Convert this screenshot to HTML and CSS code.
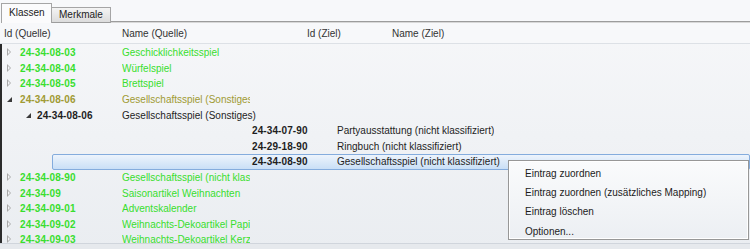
FILE: index.html
```html
<!DOCTYPE html>
<html>
	<head>
		<meta charset="utf-8">
		<title>Klassen</title>
		<link rel="stylesheet" href="styles.css">
	</head>
	<body>
	<div class="win">
		<div class="tabs">
			<div class="tab on">Klassen</div>
			<div class="tab">Merkmale</div>
			<div class="tabfill"></div>
		</div>
		<div class="panel">
			<div class="head">
				<span class="h1">Id (Quelle)</span>
				<span class="h2">Name (Quelle)</span>
				<span class="h3">Id (Ziel)</span>
				<span class="h4">Name (Ziel)</span>
			</div>
			<div class="list">
				<div class="row l0 green"><i class="exp closed"></i><span class="id">24-34-08-03</span><span class="nm">Geschicklichkeitsspiel</span></div>
				<div class="row l0 green"><i class="exp closed"></i><span class="id">24-34-08-04</span><span class="nm">Würfelspiel</span></div>
				<div class="row l0 green"><i class="exp closed"></i><span class="id">24-34-08-05</span><span class="nm">Brettspiel</span></div>
				<div class="row l0 olive"><i class="exp open"></i><span class="id">24-34-08-06</span><span class="nm">Gesellschaftsspiel (Sonstiges)</span></div>
				<div class="row l1"><i class="exp open"></i><span class="id">24-34-08-06</span><span class="nm">Gesellschaftsspiel (Sonstiges)</span></div>
				<div class="row l2"><span class="id">24-34-07-90</span><span class="nm">Partyausstattung (nicht klassifiziert)</span></div>
				<div class="row l2"><span class="id">24-29-18-90</span><span class="nm">Ringbuch (nicht klassifiziert)</span></div>
				<div class="row l2 sel"><span class="id">24-34-08-90</span><span class="nm">Gesellschaftsspiel (nicht klassifiziert)</span></div>
				<div class="row l0 green"><i class="exp closed"></i><span class="id">24-34-08-90</span><span class="nm">Gesellschaftsspiel (nicht klassifiziert)</span></div>
				<div class="row l0 green"><i class="exp closed"></i><span class="id">24-34-09</span><span class="nm">Saisonartikel Weihnachten</span></div>
				<div class="row l0 green"><i class="exp closed"></i><span class="id">24-34-09-01</span><span class="nm">Adventskalender</span></div>
				<div class="row l0 green"><i class="exp closed"></i><span class="id">24-34-09-02</span><span class="nm">Weihnachts-Dekoartikel Papier</span></div>
				<div class="row l0 green"><i class="exp closed"></i><span class="id">24-34-09-03</span><span class="nm">Weihnachts-Dekoartikel Kerzen</span></div>
			</div>
			<div class="foot"></div>
		</div>
		<ul class="menu">
			<li>Eintrag zuordnen</li>
			<li>Eintrag zuordnen (zusätzliches Mapping)</li>
			<li>Eintrag löschen</li>
			<li>Optionen...</li>
		</ul>
	</div>
	</body>
</html>
```

FILE: styles.css
```css
* {margin: 0;padding: 0;box-sizing: border-box;}
li{list-style: none;}
body {
	width: 750px;
	height: 249px;
	overflow: hidden;
	font-family: "Liberation Sans", Arial, sans-serif;
	font-size: 10px;
	color: #1e1e1e;
	background: #f7f8fa;
}
.win {
	position: relative;
	height: 249px;
	display: flex;
	flex-direction: column;
}
/* Reiter oben */
.tabs {
	display: flex;
	align-items: flex-end;
	height: 23px;
	padding-left: 1px;
}
.tab {
	height: 16px;
	padding: 0 7px;
	line-height: 14px;
	border: 1px solid #a5a5a5;
	border-left: none;
	background: linear-gradient(#f4f4f4, #dcdcdc);
	color: #222;
	border-bottom: 1px solid #9c9c9c;
}
.tab.on {
	height: 20px;
	line-height: 18px;
	width: 51px;
	border-left: 1px solid #a5a5a5;
	border-bottom: none;
	background: #fbfbfc;
	padding: 0 7px;
}
.tabfill {
	flex: 1;
	height: 2px;
	border-top: 1px solid #9c9c9c;
	border-bottom: 1px solid #d8d8d8;
}
/* Liste */
.panel {
	flex: 1;
	display: flex;
	flex-direction: column;
	background: linear-gradient(#f6f7f9, #eaedf1);
}
.head {
	height: 21px;
	display: flex;
	align-items: center;
	padding-top: 1px;
	color: #333;
	border-bottom: 1px solid #dde1e6;
	background: #f7f8fa;
}
.head span {
	display: block;
}
.h1 {width: 122px;padding-left: 4px;}
.h2 {width: 185px;}
.h3 {width: 85px;}
.list {
	height: 199px;
	overflow: hidden;
	border-left: 2px solid #2b2b2b;
	padding-top: 1px;
}
.row {
	height: 15.6px;
	display: flex;
	align-items: center;
	white-space: nowrap;
}
.row .id {
	font-weight: bold;
	letter-spacing: 0.1px;
}
.row .nm {
	overflow: hidden;
}
.l0 {padding-left: 2px;}
.l0 .id {width: 102px;}
.l0 .nm {width: 128px;}
.l1 {padding-left: 21px;}
.l1 .id {width: 85px;}
.l2 {padding-left: 250px;}
.l2 .id {width: 85px;}
.green {color: #38de2e;}
.olive {color: #a09a33;}
.exp {
	display: block;
	width: 16px;
	height: 9px;
	position: relative;
}
.l1 .exp {width: 14px;}
.exp.closed::before {
	content: "";
	position: absolute;
	left: 3px;
	top: 0;
	border-style: solid;
	border-width: 4px 0 4px 4px;
	border-color: transparent transparent transparent #a8a8a8;
}
.exp.closed::after {
	content: "";
	position: absolute;
	left: 4px;
	top: 2px;
	border-style: solid;
	border-width: 2px 0 2px 2px;
	border-color: transparent transparent transparent #f4f5f8;
}
.exp.open::before {
	content: "";
	position: absolute;
	left: 3px;
	top: 2px;
	border-style: solid;
	border-width: 0 0 5px 5px;
	border-color: transparent transparent #3a3a3a transparent;
}
.row.sel {
	margin-left: 50px;
	padding-left: 199px;
	border: 1px solid #84acdd;
	border-radius: 2px;
	background: linear-gradient(#edf4fc, #c9dff6);
}
.foot {
	flex: 1;
	border-top: 1px solid #d0d5dc;
	background: #e6e9ed;
}
/* Kontextmenue */
.menu {
	position: absolute;
	left: 508px;
	top: 160px;
	width: 241px;
	height: 80px;
	border: 1px solid #979797;
	background: linear-gradient(#fafbfc, #eceff3);
	box-shadow: inset 0 0 0 1px #fff;
	padding-top: 3px;
}
.menu li {
	height: 19.2px;
	line-height: 19.2px;
	padding-left: 16px;
	color: #1c1c1c;
}
```
